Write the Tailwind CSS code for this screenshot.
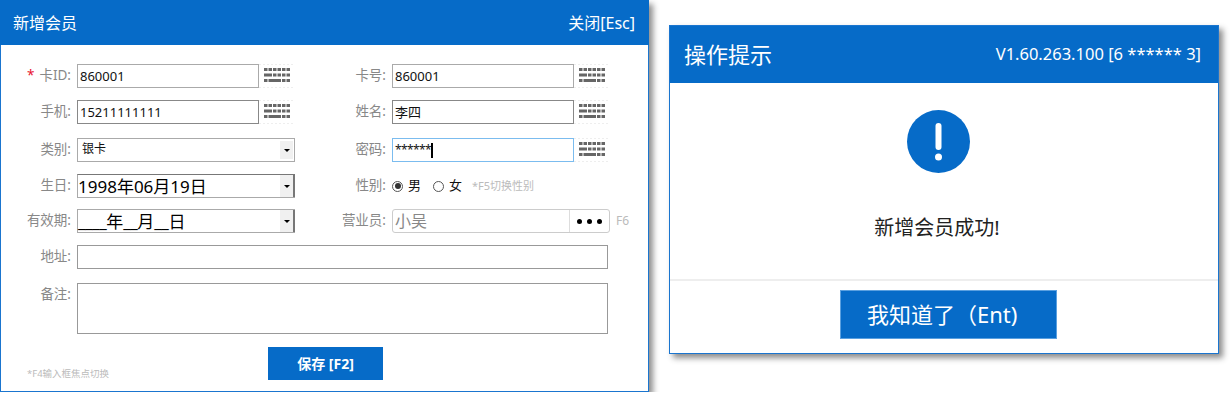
<!DOCTYPE html>
<html lang="zh-CN">
<head>
    <meta charset="UTF-8">
    <title>新增会员</title>
    <script src="https://cdn.jsdelivr.net/npm/@tailwindcss/browser@4"></script>
</head>
<body class="bg-white overflow-hidden font-['Noto_Sans','Noto_Sans_CJK_SC',sans-serif]">
<svg class="hidden">
    <symbol id="kb" viewBox="0 0 36 24">
        <g fill="#666">
            <rect x="5" y="4" width="3.5" height="3"/><rect x="9.5" y="4" width="3.5" height="3"/><rect x="14" y="4" width="3.5" height="3"/><rect x="18.5" y="4" width="3.5" height="3"/><rect x="23" y="4" width="3.5" height="3"/><rect x="27.5" y="4" width="3.5" height="3"/>
            <rect x="5" y="9.5" width="8" height="3"/><rect x="14" y="9.5" width="3.5" height="3"/><rect x="18.5" y="9.5" width="3.5" height="3"/><rect x="23" y="9.5" width="3.5" height="3"/><rect x="27.5" y="9.5" width="3.5" height="3"/>
            <rect x="5" y="15" width="3.5" height="3"/><rect x="9.5" y="15" width="12.5" height="3"/><rect x="23" y="15" width="3.5" height="3"/><rect x="27.5" y="15" width="3.5" height="3"/>
        </g>
        <path d="M0 .5H36M0 23.5H36" stroke="#eee" stroke-dasharray="2 2" fill="none"/>
    </symbol>
</svg>
<div class="flex items-start">
    <!-- 新增会员 -->
    <div class="w-[649px] h-[392px] flex flex-col bg-white border border-[#1a75cf] border-t-0 shadow-[4px_4px_6px_rgba(0,0,0,0.45)]">
        <div class="h-[45px] shrink-0 -mx-px bg-[#066bc8] text-white text-[16px] flex items-center justify-between pl-[13px] pr-[14px]">
            <span>新增会员</span>
            <span>关闭[Esc]</span>
        </div>
        <div class="relative flex-1 text-[13px] text-[#111]">
            <!-- row 1 -->
            <div class="flex mt-[19px] h-[24px]">
                <div class="w-[329px] flex items-center">
                    <label class="w-[70px] mr-[6px] pb-[2px] text-right text-[13.5px] text-[#888]"><span class="text-[#e8112d] mr-[5px]">*</span>卡ID:</label>
                    <input value="860001" class="w-[182px] h-[24px] px-[2px] pb-[1px] border border-[#aaa] outline-none">
                    <svg class="w-[36px] h-[24px]"><use href="#kb"/></svg>
                </div>
                <div class="flex items-center">
                    <label class="w-[56px] mr-[6px] pb-[2px] text-right text-[13.5px] text-[#888]">卡号:</label>
                    <input value="860001" class="w-[182px] h-[24px] px-[2px] pb-[1px] border border-[#aaa] outline-none">
                    <svg class="w-[36px] h-[24px]"><use href="#kb"/></svg>
                </div>
            </div>
            <!-- row 2 -->
            <div class="flex mt-[12px] h-[24px]">
                <div class="w-[329px] flex items-center">
                    <label class="w-[70px] mr-[6px] pb-[2px] text-right text-[13.5px] text-[#888]">手机:</label>
                    <input value="15211111111" class="w-[182px] h-[24px] px-[2px] pb-[1px] border border-[#888] outline-none">
                    <svg class="w-[36px] h-[24px]"><use href="#kb"/></svg>
                </div>
                <div class="flex items-center">
                    <label class="w-[56px] mr-[6px] pb-[2px] text-right text-[13.5px] text-[#888]">姓名:</label>
                    <input value="李四" class="w-[182px] h-[24px] px-[2px] pb-[1px] border border-[#888] outline-none">
                    <svg class="w-[36px] h-[24px]"><use href="#kb"/></svg>
                </div>
            </div>
            <!-- row 3 -->
            <div class="flex mt-[14px] h-[24px]">
                <div class="w-[329px] flex items-center">
                    <label class="w-[70px] mr-[6px] pb-[2px] text-right text-[13.5px] text-[#888]">类别:</label>
                    <div class="w-[218px] h-[24px] border border-[#aaa] flex items-center justify-between pl-[4px] pr-[1px] text-[12px]">
                        <span class="pb-[2px]">银卡</span>
                        <span class="w-[13px] h-[18px] bg-[#f0f0f0] flex items-center justify-center">
                            <span class="w-0 h-0 border-x-[3px] border-x-transparent border-t-[3px] border-t-black"></span>
                        </span>
                    </div>
                </div>
                <div class="flex items-center">
                    <label class="w-[56px] mr-[6px] pb-[2px] text-right text-[13.5px] text-[#888]">密码:</label>
                    <div class="w-[182px] h-[24px] px-[2px] border border-[#7bbcef] flex items-center">
                        <span class="tracking-[-0.6px] text-[12px]">******</span>
                        <span class="w-[2px] h-[15px] bg-black"></span>
                    </div>
                    <svg class="w-[36px] h-[24px]"><use href="#kb"/></svg>
                </div>
            </div>
            <!-- row 4 -->
            <div class="flex mt-[12px] h-[24px]">
                <div class="w-[329px] flex items-center">
                    <label class="w-[70px] mr-[6px] pb-[2px] text-right text-[13.5px] text-[#888]">生日:</label>
                    <div class="w-[218px] h-[24px] border border-r-0 border-[#aaa] border-t-[#777] flex items-center justify-between text-[17px] text-black leading-none">
                        <span>1998年06月19日</span>
                        <span class="w-[15px] h-full bg-[#f0f0f0] border-r-2 border-[#777] flex items-center justify-center">
                            <span class="w-0 h-0 border-x-[3px] border-x-transparent border-t-[3px] border-t-black"></span>
                        </span>
                    </div>
                </div>
                <div class="flex items-center text-[13px]">
                    <label class="w-[56px] mr-[6px] pb-[2px] text-right text-[13.5px] text-[#888]">性别:</label>
                    <span class="w-[11px] h-[11px] rounded-full border border-[#555] flex items-center justify-center"><span class="w-[6px] h-[6px] rounded-full bg-[#333]"></span></span>
                    <span class="ml-[5px]">男</span>
                    <span class="w-[11px] h-[11px] rounded-full border border-[#555] ml-[12px]"></span>
                    <span class="ml-[5px]">女</span>
                    <span class="ml-[10px] text-[#bbb] text-[11px]">*F5切换性别</span>
                </div>
            </div>
            <!-- row 5 -->
            <div class="flex mt-[11px] h-[24px]">
                <div class="w-[329px] flex items-center">
                    <label class="w-[70px] mr-[6px] pb-[2px] text-right text-[13.5px] text-[#888]">有效期:</label>
                    <div class="w-[218px] h-[24px] border border-r-0 border-[#aaa] flex items-center justify-between text-[17px] text-black leading-none">
                        <span><span class="tracking-[-0.5px]">____</span>年<span class="tracking-[-0.5px]">__</span>月<span class="tracking-[-0.5px]">__</span>日</span>
                        <span class="w-[15px] h-full bg-[#f0f0f0] border-r-2 border-[#777] flex items-center justify-center">
                            <span class="w-0 h-0 border-x-[3px] border-x-transparent border-t-[3px] border-t-black"></span>
                        </span>
                    </div>
                </div>
                <div class="flex items-center">
                    <label class="w-[56px] mr-[6px] pb-[2px] text-right text-[13.5px] text-[#888]">营业员:</label>
                    <div class="w-[218px] h-[24px] border border-[#ccc] rounded-[3px] flex items-center justify-between pl-[2px] text-[16px] text-[#888]">
                        <span>小吴</span>
                        <span class="w-[40px] h-full border-l border-[#ddd] flex items-center justify-center gap-[5px]">
                            <span class="w-[5px] h-[5px] rounded-full bg-black"></span>
                            <span class="w-[5px] h-[5px] rounded-full bg-black"></span>
                            <span class="w-[5px] h-[5px] rounded-full bg-black"></span>
                        </span>
                    </div>
                    <span class="ml-[6px] text-[12px] text-[#bbb]">F6</span>
                </div>
            </div>
            <!-- address -->
            <div class="flex items-center mt-[12px] h-[24px]">
                <label class="w-[70px] mr-[6px] pb-[2px] text-right text-[13.5px] text-[#888]">地址:</label>
                <input class="w-[531px] h-[24px] border border-[#999] outline-none">
            </div>
            <!-- notes -->
            <div class="flex items-start mt-[14px]">
                <label class="w-[70px] mr-[6px] mt-[1px] text-right text-[13.5px] text-[#888]">备注:</label>
                <div class="w-[531px] h-[51px] border border-[#999]"></div>
            </div>
            <div class="flex items-end mt-[13px]">
                <span class="ml-[26px] w-[241px] text-[9.5px] leading-[12px] text-[#bbb]">*F4输入框焦点切换</span>
                <button class="w-[115px] h-[33px] bg-[#066bc8] text-white text-[14px] font-bold">保存 [F2]</button>
            </div>
        </div>
    </div>

    <!-- 操作提示 -->
    <div class="w-[550px] h-[329px] mt-[25px] ml-[20px] flex flex-col bg-white border border-[#1a75cf] shadow-[4px_4px_6px_rgba(0,0,0,0.45)]">
        <div class="h-[57px] shrink-0 bg-[#066bc8] text-white flex items-center justify-between pl-[14px] pr-[17px]">
            <span class="text-[22px]">操作提示</span>
            <span class="text-[16.5px]">V1.60.263.100 [6 ****** 3]</span>
        </div>
        <div class="flex-1 flex flex-col items-center">
            <svg class="w-[63px] h-[63px] mt-[27px] -ml-[12px]" viewBox="0 0 63 63">
                <circle cx="31.5" cy="31.5" r="31.5" fill="#066bc8"/>
                <rect x="28.5" y="13" width="6" height="27" rx="3" fill="#fff"/>
                <circle cx="31.5" cy="47" r="3.5" fill="#fff"/>
            </svg>
            <div class="mt-[42px] -ml-[14px] text-[20px] leading-[26px] text-[#222]">新增会员成功!</div>
            <div class="mt-[38px] w-full h-[2px] bg-[#eee]"></div>
            <button class="mt-[9px] ml-[9px] w-[217px] h-[49px] bg-[#066bc8] text-white text-[22px] text-left pl-[26px] border border-[#5aa0e0]">我知道了（Ent)</button>
        </div>
    </div>
</div>
</body>
</html>
